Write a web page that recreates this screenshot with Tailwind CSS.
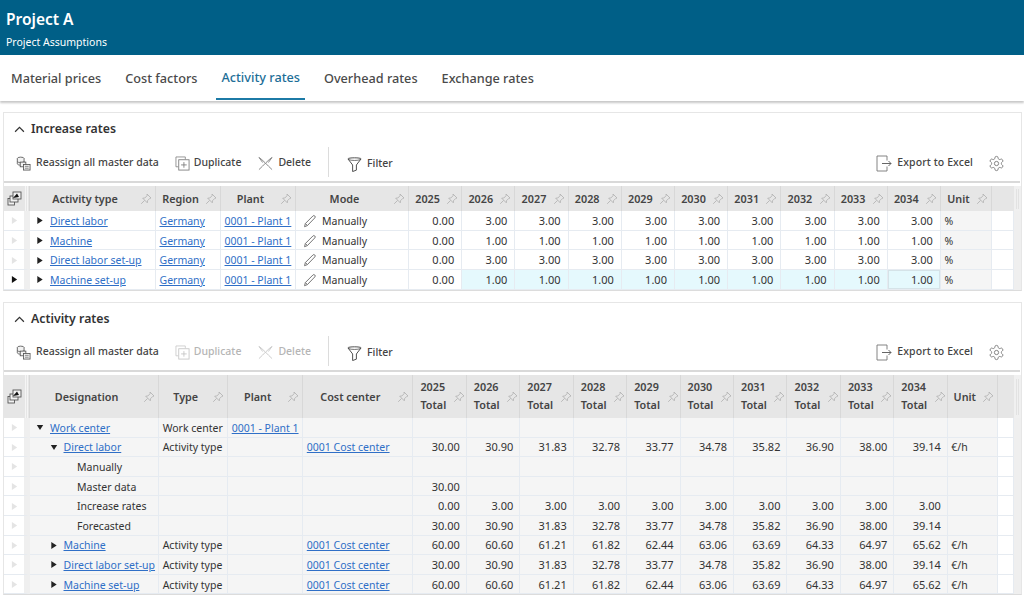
<!DOCTYPE html>
<html>
<head>
<meta charset="utf-8">
<script src="https://cdn.jsdelivr.net/npm/@tailwindcss/browser@4"></script>
</head>
<body class="w-[1024px] h-[602px] overflow-hidden bg-white font-['Noto_Sans',sans-serif] text-[10.500px] text-[#333]">
<svg class="hidden">
  <symbol id="pin" viewBox="0 0 12 12"><path d="M7 1l4 4-1.2.4-2.3 2.3-.2 2.1-4.6-4.6 2.1-.2 2.3-2.3zM4.6 7.4L1.2 10.8" fill="none" stroke="#b4b4b4" stroke-width=".9"/></symbol>
  <symbol id="tri" viewBox="0 0 8 10"><path d="M1 1l6 4-6 4z" fill="currentColor"/></symbol>
  <symbol id="down" viewBox="0 0 10 8"><path d="M1 1h8L5 7z" fill="currentColor"/></symbol>
  <symbol id="pencil" viewBox="0 0 14 14"><path d="M1.500 12.700l.9-3.200L9.900 2a1.300 1.300 0 0 1 1.900 0 1.300 1.300 0 0 1 0 1.900L4.400 11.600zM2.400 9.500l2 2.100" fill="none" stroke="#777"/></symbol>
  <symbol id="reassign" viewBox="0 0 16 16"><g fill="#f3f3f3" stroke="#555" stroke-width=".9"><ellipse cx="5" cy="2.800" rx="3.600" ry="1.600"/><path d="M1.400 2.800v5.400c0 .9 1.600 1.600 3.600 1.600s3.600-.7 3.600-1.600V2.800"/><path d="M1.400 5.500c0 .9 1.600 1.600 3.600 1.600s3.600-.7 3.600-1.600"/><rect x="4.500" y="6.500" width="6" height="5"/><rect x="8" y="9" width="7" height="6"/></g><path d="M9.500 11h4M9.500 13h4" stroke="#555" stroke-width=".7"/></symbol>
  <symbol id="dup" viewBox="0 0 16 16"><path d="M3.500 11.500H1V1h10v2.500" fill="none" stroke="currentColor" stroke-width=".8"/><rect x="4" y="4" width="11" height="11" fill="#fff" stroke="currentColor" stroke-width=".9"/><path d="M9.500 6.500v6M6.500 9.500h6" stroke="currentColor" stroke-width=".9"/></symbol>
  <symbol id="del" viewBox="0 0 16 16"><path d="M1 1.500c4 2.500 9 8.500 14 13M15 1.500C11 4 6 10 1 14.500M1 1.500l4 5.500M15 1.500l-4 5.500" fill="none" stroke="currentColor" stroke-width=".9"/></symbol>
  <symbol id="filter" viewBox="0 0 16 16"><path d="M1 2c0-1.500 14-1.500 14 0L10 8.500V14l-4 1.500V8.500z" fill="none" stroke="#444" stroke-width="1"/><path d="M1.500 2.700c3 1.300 10 1.300 13 0" fill="none" stroke="#444" stroke-width=".8"/></symbol>
  <symbol id="export" viewBox="0 0 16 17"><path d="M11 5.500V1H1v15h10v-4.500" fill="none" stroke="#777" stroke-width=".9"/><path d="M6 8.500h9M12.500 6L15 8.500 12.500 11" fill="none" stroke="#555" stroke-width=".9"/></symbol>
  <symbol id="gear" viewBox="0 0 24 24"><path d="M12.220 2h-.44a2 2 0 0 0-2 2v.18a2 2 0 0 1-1 1.730l-.43.25a2 2 0 0 1-2 0l-.15-.08a2 2 0 0 0-2.730.73l-.22.38a2 2 0 0 0 .73 2.730l.15.1a2 2 0 0 1 1 1.720v.51a2 2 0 0 1-1 1.740l-.15.09a2 2 0 0 0-.73 2.730l.22.38a2 2 0 0 0 2.730.73l.15-.08a2 2 0 0 1 2 0l.43.25a2 2 0 0 1 1 1.730V20a2 2 0 0 0 2 2h.44a2 2 0 0 0 2-2v-.18a2 2 0 0 1 1-1.730l.43-.25a2 2 0 0 1 2 0l.15.08a2 2 0 0 0 2.730-.73l.22-.39a2 2 0 0 0-.73-2.730l-.15-.08a2 2 0 0 1-1-1.740v-.5a2 2 0 0 1 1-1.740l.15-.09a2 2 0 0 0 .73-2.730l-.22-.38a2 2 0 0 0-2.730-.73l-.15.08a2 2 0 0 1-2 0l-.43-.25a2 2 0 0 1-1-1.730V4a2 2 0 0 0-2-2z" fill="none" stroke="#666" stroke-width="1.100"/><circle cx="12" cy="12" r="3" fill="none" stroke="#666" stroke-width="1.100"/></symbol>
  <symbol id="chev" viewBox="0 0 10 6"><path d="M1 5l4-4 4 4" fill="none" stroke="#333" stroke-width="1.100"/></symbol>
  <symbol id="stack" viewBox="0 0 15 15"><g fill="#f2f2f2" stroke="#555" stroke-width=".9"><rect x="1" y="7.500" width="6.500" height="6.500"/><rect x="3" y="5" width="8" height="6"/><rect x="6" y="1" width="8" height="7"/></g><path d="M6 7L10 2.500 12 6z" fill="#111"/></symbol>
</svg>

<header class="h-[55px] bg-[#005f87] text-white pl-[6px] pt-[9px]">
  <div class="text-[15.500px] leading-[20px] font-semibold">Project A</div>
  <div class="text-[10.500px] leading-[14px] mt-[6px]">Project Assumptions</div>
</header>

<nav class="relative h-[46px] flex items-end pl-[6px] gap-[14px] bg-white shadow-[0_2px_2px_rgba(0,0,0,0.22)] text-[12.700px] font-medium text-[#4a4a4a]">
  <a class="h-[44px] mb-[1px] pt-[2px] px-[5px] flex items-center">Material prices</a>
  <a class="h-[44px] mb-[1px] pt-[2px] px-[5px] flex items-center">Cost factors</a>
  <a class="h-[44px] mb-[1px] pt-[2px] px-[5px] flex items-center text-[#1c6e97] border-b-2 border-[#1c7aa6]">Activity rates</a>
  <a class="h-[44px] mb-[1px] pt-[2px] px-[5px] flex items-center">Overhead rates</a>
  <a class="h-[44px] mb-[1px] pt-[2px] px-[5px] flex items-center">Exchange rates</a>
</nav>

<main class="pl-[3px] pr-[2px] pt-[11px] flex flex-col gap-[11px]">
  <section class="h-[179px] border border-[#e6e6e6] border-b-[#dcdcdc]">
    <div class="h-[33px] flex items-center pl-[10px] gap-[6px] text-[12.300px] font-semibold text-[#333]">
      <svg class="w-[11px] h-[7px]"><use href="#chev"/></svg><span>Increase rates</span>
    </div>
    <div class="h-[34px] flex items-center pl-[12px] pr-[16px] text-[#444]">
      <span class="flex items-center gap-[5px] font-medium"><svg class="w-[15px] h-[15px]"><use href="#reassign"/></svg>Reassign all master data</span>
      <span class="flex items-center gap-[4px] font-medium ml-[16px]"><svg class="w-[15px] h-[15px] text-[#777]"><use href="#dup"/></svg>Duplicate</span>
      <span class="flex items-center gap-[5px] font-medium ml-[17px]"><svg class="w-[15px] h-[15px] text-[#777]"><use href="#del"/></svg>Delete</span>
      <span class="w-px h-[30px] bg-[#dcdcdc] ml-[17px] mb-[2px]"></span>
      <span class="flex items-center gap-[5px] font-medium ml-[18px] mt-[2px]"><svg class="w-[15px] h-[15px]"><use href="#filter"/></svg>Filter</span>
      <span class="flex items-center gap-[5px] font-medium ml-auto tracking-[0.1px]"><svg class="w-[16px] h-[17px]"><use href="#export"/></svg>Export to Excel</span>
      <svg class="w-[17px] h-[17px] ml-[15px]"><use href="#gear"/></svg>
    </div>
    <div class="h-[2px] bg-[#d9d9d9] mt-[1px] mr-[1px]"></div>
    <table class="table-fixed border-separate border-spacing-0 w-[1017px] mt-[3px] leading-[14px] text-[#333] [&_th]:h-[25px] [&_th]:bg-[#e6e6e6] [&_th]:border-r [&_th]:border-[#d8d8d8] [&_th]:font-semibold [&_th]:text-[10.800px] [&_th]:text-[#444] [&_th]:p-0 [&_td]:h-[19.700px] [&_td]:p-0 [&_td]:pt-[1px] [&_td]:px-[3.500px] [&_td]:border-r [&_td]:border-b [&_td]:border-[#e6ebf1] [&_td]:whitespace-nowrap [&_td]:overflow-hidden [&_td:first-child]:pl-[7px] [&_td:first-child]:pr-0 [&_td:first-child]:border-r-[6px] [&_td:first-child]:border-r-[#efefef] [&_td:first-child]:text-[#e4e4e4] [&_td:nth-child(n+6):nth-child(-n+15)]:text-right [&_td:nth-child(n+6):nth-child(-n+15)]:text-[11px] [&_td:nth-child(n+6):nth-child(-n+15)]:pr-[7px] [&_td:nth-child(16)]:bg-[#f5f5f5] [&_td:last-child]:bg-[#efefef] [&_td:last-child]:border-0 [&_a]:text-[#2f6fc7] [&_a]:underline">
      <colgroup><col class="w-[26px]"><col class="w-[126px]"><col class="w-[65px]"><col class="w-[75px]"><col class="w-[113px]"><col class="w-[53.200px]"><col class="w-[53.200px]"><col class="w-[53.200px]"><col class="w-[53.200px]"><col class="w-[53.200px]"><col class="w-[53.200px]"><col class="w-[53.200px]"><col class="w-[53.200px]"><col class="w-[53.200px]"><col class="w-[53.200px]"><col class="w-[51px]"><col class="w-[22px]"><col class="w-[7px]"></colgroup>
      <thead><tr>
        <th><div class="flex items-center pl-[3px] h-[25px]"><svg class="w-[15px] h-[15px]"><use href="#stack"/></svg><span class="ml-auto mr-[1px] w-[3px] h-[25px] border-x border-[#f5f5f5]"></span></div></th>
        <th><div class="flex items-center pr-[3px]"><span class="flex-1 text-center">Activity type</span><svg class="w-[12px] h-[12px]"><use href="#pin"/></svg></div></th>
        <th><div class="flex items-center pr-[3px]"><span class="flex-1 text-center">Region</span><svg class="w-[12px] h-[12px]"><use href="#pin"/></svg></div></th>
        <th><div class="flex items-center pr-[3px]"><span class="flex-1 text-center">Plant</span><svg class="w-[12px] h-[12px]"><use href="#pin"/></svg></div></th>
        <th><div class="flex items-center pr-[3px]"><span class="flex-1 text-center">Mode</span><svg class="w-[12px] h-[12px]"><use href="#pin"/></svg></div></th>
        <th><div class="flex items-center pr-[3px]"><span class="flex-1 text-center">2025</span><svg class="w-[12px] h-[12px]"><use href="#pin"/></svg></div></th>
        <th><div class="flex items-center pr-[3px]"><span class="flex-1 text-center">2026</span><svg class="w-[12px] h-[12px]"><use href="#pin"/></svg></div></th>
        <th><div class="flex items-center pr-[3px]"><span class="flex-1 text-center">2027</span><svg class="w-[12px] h-[12px]"><use href="#pin"/></svg></div></th>
        <th><div class="flex items-center pr-[3px]"><span class="flex-1 text-center">2028</span><svg class="w-[12px] h-[12px]"><use href="#pin"/></svg></div></th>
        <th><div class="flex items-center pr-[3px]"><span class="flex-1 text-center">2029</span><svg class="w-[12px] h-[12px]"><use href="#pin"/></svg></div></th>
        <th><div class="flex items-center pr-[3px]"><span class="flex-1 text-center">2030</span><svg class="w-[12px] h-[12px]"><use href="#pin"/></svg></div></th>
        <th><div class="flex items-center pr-[3px]"><span class="flex-1 text-center">2031</span><svg class="w-[12px] h-[12px]"><use href="#pin"/></svg></div></th>
        <th><div class="flex items-center pr-[3px]"><span class="flex-1 text-center">2032</span><svg class="w-[12px] h-[12px]"><use href="#pin"/></svg></div></th>
        <th><div class="flex items-center pr-[3px]"><span class="flex-1 text-center">2033</span><svg class="w-[12px] h-[12px]"><use href="#pin"/></svg></div></th>
        <th><div class="flex items-center pr-[3px]"><span class="flex-1 text-center">2034</span><svg class="w-[12px] h-[12px]"><use href="#pin"/></svg></div></th>
        <th><div class="flex items-center pr-[3px]"><span class="flex-1 text-center">Unit</span><svg class="w-[12px] h-[12px]"><use href="#pin"/></svg></div></th>
        <th class="!border-r-0"></th>
        <th class="!bg-[#f0f0f0] !border-r-0"><div class="mx-auto w-[3px] h-[20px] border-x border-[#e2e2e2]"></div></th>
      </tr></thead>
      <tbody>
        <tr><td><svg class="w-[7px] h-[9px]"><use href="#tri"/></svg></td><td><div class="flex items-center gap-[6px] pl-[2.500px]"><svg class="w-[8px] h-[9px] text-[#222] shrink-0"><use href="#tri"/></svg><a>Direct labor</a></div></td><td><a>Germany</a></td><td><a>0001 - Plant 1</a></td><td><div class="flex items-center gap-[5px] pl-[3.500px]"><svg class="w-[14px] h-[14px] shrink-0"><use href="#pencil"/></svg>Manually</div></td><td>0.00</td><td>3.00</td><td>3.00</td><td>3.00</td><td>3.00</td><td>3.00</td><td>3.00</td><td>3.00</td><td>3.00</td><td>3.00</td><td>%</td><td></td><td></td></tr>
        <tr><td><svg class="w-[7px] h-[9px]"><use href="#tri"/></svg></td><td><div class="flex items-center gap-[6px] pl-[2.500px]"><svg class="w-[8px] h-[9px] text-[#222] shrink-0"><use href="#tri"/></svg><a>Machine</a></div></td><td><a>Germany</a></td><td><a>0001 - Plant 1</a></td><td><div class="flex items-center gap-[5px] pl-[3.500px]"><svg class="w-[14px] h-[14px] shrink-0"><use href="#pencil"/></svg>Manually</div></td><td>0.00</td><td>1.00</td><td>1.00</td><td>1.00</td><td>1.00</td><td>1.00</td><td>1.00</td><td>1.00</td><td>1.00</td><td>1.00</td><td>%</td><td></td><td></td></tr>
        <tr><td><svg class="w-[7px] h-[9px]"><use href="#tri"/></svg></td><td><div class="flex items-center gap-[6px] pl-[2.500px]"><svg class="w-[8px] h-[9px] text-[#222] shrink-0"><use href="#tri"/></svg><a>Direct labor set-up</a></div></td><td><a>Germany</a></td><td><a>0001 - Plant 1</a></td><td><div class="flex items-center gap-[5px] pl-[3.500px]"><svg class="w-[14px] h-[14px] shrink-0"><use href="#pencil"/></svg>Manually</div></td><td>0.00</td><td>3.00</td><td>3.00</td><td>3.00</td><td>3.00</td><td>3.00</td><td>3.00</td><td>3.00</td><td>3.00</td><td>3.00</td><td>%</td><td></td><td></td></tr>
        <tr class="[&_td:nth-child(n+7):nth-child(-n+15)]:bg-[#e5f9fd]"><td class="!text-[#111]"><svg class="w-[7px] h-[9px]"><use href="#tri"/></svg></td><td><div class="flex items-center gap-[6px] pl-[2.500px]"><svg class="w-[8px] h-[9px] text-[#222] shrink-0"><use href="#tri"/></svg><a>Machine set-up</a></div></td><td><a>Germany</a></td><td><a>0001 - Plant 1</a></td><td><div class="flex items-center gap-[5px] pl-[3.500px]"><svg class="w-[14px] h-[14px] shrink-0"><use href="#pencil"/></svg>Manually</div></td><td>0.00</td><td>1.00</td><td>1.00</td><td>1.00</td><td>1.00</td><td>1.00</td><td>1.00</td><td>1.00</td><td>1.00</td><td class="shadow-[inset_0_0_0_1px_#d5e3e8]">1.00</td><td>%</td><td></td><td></td></tr>
      </tbody>
    </table>
  </section>

  <section class="h-[293px] border border-[#e6e6e6] border-b-[#dcdcdc]">
    <div class="h-[32px] flex items-center pl-[10px] gap-[6px] text-[12.300px] font-semibold text-[#333]">
      <svg class="w-[11px] h-[7px]"><use href="#chev"/></svg><span>Activity rates</span>
    </div>
    <div class="h-[34px] flex items-center pl-[12px] pr-[16px] text-[#444]">
      <span class="flex items-center gap-[5px] font-medium"><svg class="w-[15px] h-[15px]"><use href="#reassign"/></svg>Reassign all master data</span>
      <span class="flex items-center gap-[4px] font-medium ml-[16px] text-[#b5b5b5]"><svg class="w-[15px] h-[15px] text-[#c4c4c4]"><use href="#dup"/></svg>Duplicate</span>
      <span class="flex items-center gap-[5px] font-medium ml-[17px] text-[#b5b5b5]"><svg class="w-[15px] h-[15px] text-[#c4c4c4]"><use href="#del"/></svg>Delete</span>
      <span class="w-px h-[30px] bg-[#dcdcdc] ml-[17px] mb-[2px]"></span>
      <span class="flex items-center gap-[5px] font-medium ml-[18px] mt-[2px]"><svg class="w-[15px] h-[15px]"><use href="#filter"/></svg>Filter</span>
      <span class="flex items-center gap-[5px] font-medium ml-auto tracking-[0.1px]"><svg class="w-[16px] h-[17px]"><use href="#export"/></svg>Export to Excel</span>
      <svg class="w-[17px] h-[17px] ml-[15px]"><use href="#gear"/></svg>
    </div>
    <div class="h-[2px] bg-[#d9d9d9] mt-[1px] mr-[1px]"></div>
    <table class="table-fixed border-separate border-spacing-0 w-[1017px] mt-[3px] leading-[14px] text-[#333] [&_th]:h-[43px] [&_th]:bg-[#e6e6e6] [&_th]:border-r [&_th]:border-[#d8d8d8] [&_th]:font-semibold [&_th]:text-[10.800px] [&_th]:text-[#444] [&_th]:p-0 [&_td]:h-[19.600px] [&_td]:p-0 [&_td]:pt-[1px] [&_td]:px-[3.500px] [&_td]:bg-[#f5f5f5] [&_td]:border-r [&_td]:border-b [&_td]:border-[#e6ebf1] [&_td]:whitespace-nowrap [&_td]:overflow-hidden [&_td:first-child]:bg-white [&_td:first-child]:pl-[7px] [&_td:first-child]:pr-0 [&_td:first-child]:border-r-[6px] [&_td:first-child]:border-r-[#efefef] [&_td:first-child]:text-[#e4e4e4] [&_td:nth-child(n+6):nth-child(-n+15)]:text-right [&_td:nth-child(n+6):nth-child(-n+15)]:text-[11px] [&_td:nth-child(n+6):nth-child(-n+15)]:pr-[6px] [&_td:nth-child(17)]:bg-white [&_td:last-child]:bg-[#efefef] [&_td:last-child]:border-0 [&_a]:text-[#2f6fc7] [&_a]:underline">
      <colgroup><col class="w-[26px]"><col class="w-[129px]"><col class="w-[69px]"><col class="w-[75px]"><col class="w-[110px]"><col class="w-[53.400px]"><col class="w-[53.400px]"><col class="w-[53.400px]"><col class="w-[53.400px]"><col class="w-[53.400px]"><col class="w-[53.400px]"><col class="w-[53.400px]"><col class="w-[53.400px]"><col class="w-[53.400px]"><col class="w-[53.400px]"><col class="w-[50px]"><col class="w-[16px]"><col class="w-[7px]"></colgroup>
      <thead><tr>
        <th><div class="flex items-center pl-[3px] h-[43px]"><svg class="w-[15px] h-[15px]"><use href="#stack"/></svg><span class="ml-auto mr-[1px] w-[3px] h-[43px] border-x border-[#f5f5f5]"></span></div></th>
        <th><div class="flex items-center pr-[3px]"><span class="flex-1 text-center">Designation</span><svg class="w-[12px] h-[12px]"><use href="#pin"/></svg></div></th>
        <th><div class="flex items-center pr-[3px]"><span class="flex-1 text-center">Type</span><svg class="w-[12px] h-[12px]"><use href="#pin"/></svg></div></th>
        <th><div class="flex items-center pr-[3px]"><span class="flex-1 text-center">Plant</span><svg class="w-[12px] h-[12px]"><use href="#pin"/></svg></div></th>
        <th><div class="flex items-center pr-[3px]"><span class="flex-1 text-center">Cost center</span><svg class="w-[12px] h-[12px]"><use href="#pin"/></svg></div></th>
        <th><div class="flex items-center pr-[1px] leading-[18px] text-left"><span class="flex-1 pl-[7px] pb-[2px]">2025<br>Total</span><svg class="w-[12px] h-[12px]"><use href="#pin"/></svg></div></th>
        <th><div class="flex items-center pr-[1px] leading-[18px] text-left"><span class="flex-1 pl-[7px] pb-[2px]">2026<br>Total</span><svg class="w-[12px] h-[12px]"><use href="#pin"/></svg></div></th>
        <th><div class="flex items-center pr-[1px] leading-[18px] text-left"><span class="flex-1 pl-[7px] pb-[2px]">2027<br>Total</span><svg class="w-[12px] h-[12px]"><use href="#pin"/></svg></div></th>
        <th><div class="flex items-center pr-[1px] leading-[18px] text-left"><span class="flex-1 pl-[7px] pb-[2px]">2028<br>Total</span><svg class="w-[12px] h-[12px]"><use href="#pin"/></svg></div></th>
        <th><div class="flex items-center pr-[1px] leading-[18px] text-left"><span class="flex-1 pl-[7px] pb-[2px]">2029<br>Total</span><svg class="w-[12px] h-[12px]"><use href="#pin"/></svg></div></th>
        <th><div class="flex items-center pr-[1px] leading-[18px] text-left"><span class="flex-1 pl-[7px] pb-[2px]">2030<br>Total</span><svg class="w-[12px] h-[12px]"><use href="#pin"/></svg></div></th>
        <th><div class="flex items-center pr-[1px] leading-[18px] text-left"><span class="flex-1 pl-[7px] pb-[2px]">2031<br>Total</span><svg class="w-[12px] h-[12px]"><use href="#pin"/></svg></div></th>
        <th><div class="flex items-center pr-[1px] leading-[18px] text-left"><span class="flex-1 pl-[7px] pb-[2px]">2032<br>Total</span><svg class="w-[12px] h-[12px]"><use href="#pin"/></svg></div></th>
        <th><div class="flex items-center pr-[1px] leading-[18px] text-left"><span class="flex-1 pl-[7px] pb-[2px]">2033<br>Total</span><svg class="w-[12px] h-[12px]"><use href="#pin"/></svg></div></th>
        <th><div class="flex items-center pr-[1px] leading-[18px] text-left"><span class="flex-1 pl-[7px] pb-[2px]">2034<br>Total</span><svg class="w-[12px] h-[12px]"><use href="#pin"/></svg></div></th>
        <th><div class="flex items-center pr-[3px]"><span class="flex-1 text-center">Unit</span><svg class="w-[12px] h-[12px]"><use href="#pin"/></svg></div></th>
        <th class="!border-r-0"></th>
        <th class="!bg-[#f0f0f0] !border-r-0"><div class="mx-auto w-[3px] h-[36px] border-x border-[#e2e2e2]"></div></th>
      </tr></thead>
      <tbody>
        <tr><td><svg class="w-[7px] h-[9px]"><use href="#tri"/></svg></td><td><div class="flex items-center gap-[6px] pl-[2.500px]"><svg class="w-[8px] h-[7px] text-[#222] shrink-0"><use href="#down"/></svg><a>Work center</a></div></td><td>Work center</td><td><a>0001 - Plant 1</a></td><td></td><td></td><td></td><td></td><td></td><td></td><td></td><td></td><td></td><td></td><td></td><td></td><td></td><td></td></tr>
        <tr><td><svg class="w-[7px] h-[9px]"><use href="#tri"/></svg></td><td><div class="flex items-center gap-[6px] pl-[16px]"><svg class="w-[8px] h-[7px] text-[#222] shrink-0"><use href="#down"/></svg><a>Direct labor</a></div></td><td>Activity type</td><td></td><td><a>0001 Cost center</a></td><td>30.00</td><td>30.90</td><td>31.83</td><td>32.78</td><td>33.77</td><td>34.78</td><td>35.82</td><td>36.90</td><td>38.00</td><td>39.14</td><td>€/h</td><td></td><td></td></tr>
        <tr><td><svg class="w-[7px] h-[9px]"><use href="#tri"/></svg></td><td class="!pl-[47px]">Manually</td><td></td><td></td><td></td><td></td><td></td><td></td><td></td><td></td><td></td><td></td><td></td><td></td><td></td><td></td><td></td><td></td></tr>
        <tr><td><svg class="w-[7px] h-[9px]"><use href="#tri"/></svg></td><td class="!pl-[47px]">Master data</td><td></td><td></td><td></td><td>30.00</td><td></td><td></td><td></td><td></td><td></td><td></td><td></td><td></td><td></td><td></td><td></td><td></td></tr>
        <tr><td><svg class="w-[7px] h-[9px]"><use href="#tri"/></svg></td><td class="!pl-[47px]">Increase rates</td><td></td><td></td><td></td><td>0.00</td><td>3.00</td><td>3.00</td><td>3.00</td><td>3.00</td><td>3.00</td><td>3.00</td><td>3.00</td><td>3.00</td><td>3.00</td><td></td><td></td><td></td></tr>
        <tr><td><svg class="w-[7px] h-[9px]"><use href="#tri"/></svg></td><td class="!pl-[47px]">Forecasted</td><td></td><td></td><td></td><td>30.00</td><td>30.90</td><td>31.83</td><td>32.78</td><td>33.77</td><td>34.78</td><td>35.82</td><td>36.90</td><td>38.00</td><td>39.14</td><td></td><td></td><td></td></tr>
        <tr><td><svg class="w-[7px] h-[9px]"><use href="#tri"/></svg></td><td><div class="flex items-center gap-[6px] pl-[16px]"><svg class="w-[8px] h-[9px] text-[#222] shrink-0"><use href="#tri"/></svg><a>Machine</a></div></td><td>Activity type</td><td></td><td><a>0001 Cost center</a></td><td>60.00</td><td>60.60</td><td>61.21</td><td>61.82</td><td>62.44</td><td>63.06</td><td>63.69</td><td>64.33</td><td>64.97</td><td>65.62</td><td>€/h</td><td></td><td></td></tr>
        <tr><td><svg class="w-[7px] h-[9px]"><use href="#tri"/></svg></td><td><div class="flex items-center gap-[6px] pl-[16px]"><svg class="w-[8px] h-[9px] text-[#222] shrink-0"><use href="#tri"/></svg><a>Direct labor set-up</a></div></td><td>Activity type</td><td></td><td><a>0001 Cost center</a></td><td>30.00</td><td>30.90</td><td>31.83</td><td>32.78</td><td>33.77</td><td>34.78</td><td>35.82</td><td>36.90</td><td>38.00</td><td>39.14</td><td>€/h</td><td></td><td></td></tr>
        <tr><td><svg class="w-[7px] h-[9px]"><use href="#tri"/></svg></td><td><div class="flex items-center gap-[6px] pl-[16px]"><svg class="w-[8px] h-[9px] text-[#222] shrink-0"><use href="#tri"/></svg><a>Machine set-up</a></div></td><td>Activity type</td><td></td><td><a>0001 Cost center</a></td><td>60.00</td><td>60.60</td><td>61.21</td><td>61.82</td><td>62.44</td><td>63.06</td><td>63.69</td><td>64.33</td><td>64.97</td><td>65.62</td><td>€/h</td><td></td><td></td></tr>
      </tbody>
    </table>
  </section>
</main>
</body>
</html>
